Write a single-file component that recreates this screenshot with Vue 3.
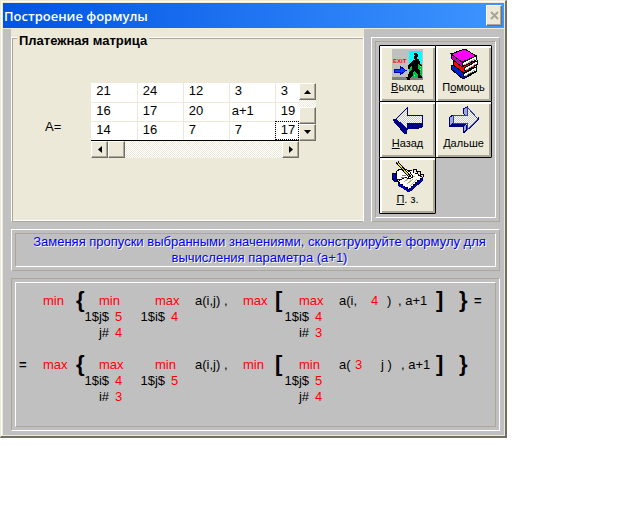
<script setup>
const matrix = [
  ['21', '24', '12', '3', '3'],
  ['16', '17', '20', 'a+1', '19'],
  ['14', '16', '7', '7', '17']
]

const formulas = [
  {
    lead: '',
    outer: 'min',
    first: { fn: 'min', range: '1$j$', count: '5', index: 'j#', skip: '4' },
    second: { fn: 'max', range: '1$i$', count: '4' },
    inner: 'max',
    third: { fn: 'max', range: '1$i$', count: '4', index: 'i#', skip: '3' },
    kind: 'by-column',
    arg: [{ t: 'a(i,' }, { t: '4', red: true }, { t: ')' }, { t: ', a+1' }],
    tail: '='
  },
  {
    lead: '=',
    outer: 'max',
    first: { fn: 'max', range: '1$i$', count: '4', index: 'i#', skip: '3' },
    second: { fn: 'min', range: '1$j$', count: '5' },
    inner: 'min',
    third: { fn: 'min', range: '1$j$', count: '5', index: 'j#', skip: '4' },
    kind: 'by-row',
    arg: [{ t: 'a(' }, { t: '3', red: true }, { t: 'j )' }, { t: ', a+1' }],
    tail: ''
  }
]
</script>

<template>
  <main class="window">
    <header class="titlebar">
      <h1>Построение формулы</h1>
      <button class="close" type="button" aria-label="Закрыть">
        <svg width="9" height="9" viewBox="0 0 9 9"><path d="M1 1L8 8M8 1L1 8" stroke="#a7a497" stroke-width="2" /></svg>
      </button>
    </header>

    <div class="body">
      <div class="top">
        <section class="matrix-box">
          <div class="group">
            <h2>Платежная матрица</h2>
            <div class="matrix">
              <span class="name">A=</span>
              <div class="grid-view">
                <table>
                  <tbody>
                    <tr v-for="(row, r) in matrix" :key="r">
                      <td v-for="(cell, c) in row" :key="c" :class="{ wide: cell.length > 2, focus: r === 2 && c === 4 }">{{ cell }}</td>
                    </tr>
                  </tbody>
                </table>
                <div class="bar vertical">
                  <button type="button" aria-label="Вверх"><svg width="7" height="4" viewBox="0 0 7 4"><path d="M0 4L3.500 0L7 4Z" /></svg></button>
                  <span class="track"></span>
                  <span class="thumb"></span>
                  <button type="button" aria-label="Вниз"><svg width="7" height="4" viewBox="0 0 7 4"><path d="M0 0L3.500 4L7 0Z" /></svg></button>
                </div>
                <div class="bar horizontal">
                  <button type="button" aria-label="Влево"><svg width="4" height="7" viewBox="0 0 4 7"><path d="M4 0L0 3.500L4 7Z" /></svg></button>
                  <span class="thumb"></span>
                  <span class="track"></span>
                  <button type="button" aria-label="Вправо"><svg width="4" height="7" viewBox="0 0 4 7"><path d="M0 0L4 3.500L0 7Z" /></svg></button>
                </div>
              </div>
            </div>
          </div>
        </section>

        <nav class="panel raised tools">
          <div class="inset buttons">
            <button class="tool" type="button">
              <svg width="32" height="32" viewBox="0 0 32 32" shape-rendering="crispEdges">
                <rect width="31" height="31" fill="#c0c0c0" />
                <rect y="28" width="31" height="3" fill="#808080" />
                <rect x="17" y="2" width="13" height="13" fill="#00ffff" />
                <rect x="17" y="15" width="13" height="13" fill="#00c040" />
                <path d="M18 17h1m2 0h1m3 0h1m2 0h1M25 20h1m2 0h1M24 23h1m2 0h1M22 26h1m3 0h1" stroke="#a0f0a0" />
                <text x="1" y="14" font-size="6" font-weight="bold" fill="#ff0000" font-family="Liberation Sans, sans-serif">EXiT</text>
                <path d="M2 20h6v-3l6 4.500l-6 4.500v-3h-6z" fill="#0040ff" stroke="#0000c0" stroke-width="1" />
                <path d="M22 4h3v1h1v3h-1v2h2v2h1v3l2 2h-1l-3-2v5l2 2v3l2 3v1h-4v-3l-3-4-2 1v3l-2 3h-1v2h-3v-1l-1-2h1l1-1 1-4 3-2v-5l-2 2v2h-2v-3l3-4 3-2h1v-1h-1v-3h1z" fill="#000" />
              </svg>
              <span><u>В</u>ыход</span>
            </button>
            <button class="tool" type="button">
              <svg width="32" height="32" viewBox="0 0 32 32" shape-rendering="crispEdges">
                <g stroke="#000" stroke-width="1">
                  <path d="M4 16L3 20L15 30L28 23V19L15 20Z" fill="#0020d0" />
                  <path d="M15 25L28 18V22L15 28Z" fill="#fff" />
                  <path d="M6 12L5 16L16 24L29 16V12L16 14Z" fill="#ff0000" />
                  <path d="M16 19L29 12V15L16 22Z" fill="#fff" />
                  <path d="M3 5L4 10L14 18L28 11V7L14 13Z" fill="#c000c0" />
                  <path d="M14 14L28 7V11L14 17Z" fill="#fff" />
                  <path d="M17 0L28 7L14 13L3 5Z" fill="#ff00ff" />
                </g>
                <path d="M16 16L27 10M18 21L28 15M17 27L27 21" stroke="#a0a0a0" />
              </svg>
              <span>П<u>о</u>мощь</span>
            </button>
            <button class="tool" type="button">
              <svg width="32" height="32" viewBox="0 0 32 32" shape-rendering="crispEdges">
                <defs>
                  <pattern id="mesh" width="2" height="2" patternUnits="userSpaceOnUse">
                    <rect width="2" height="2" fill="#fff" /><rect width="1" height="1" fill="#c8c8c8" /><rect x="1" y="1" width="1" height="1" fill="#c8c8c8" />
                  </pattern>
                </defs>
                <path d="M1 15L4 14L15 24V18H30V22L27 23H14V28H12Z" fill="#000080" stroke="#000080" />
                <path d="M4 14L15 3V10H30V18H15V24Z" fill="url(#mesh)" stroke="#0000a0" />
                <path d="M1 15L4 14L15 3" fill="none" stroke="#000080" />
              </svg>
              <span><u>Н</u>азад</span>
            </button>
            <button class="tool" type="button">
              <svg width="32" height="32" viewBox="0 0 32 32" shape-rendering="crispEdges">
                <path d="M15 4L19 2V10H5L1 13V22L5 18H19L15 22V28L19 25Z" fill="#a0a8d8" stroke="#000080" />
                <path d="M1 22L5 18H19L16 22Z" fill="#000080" />
                <path d="M16 28L30 15V13L19 24Z" fill="#8088c0" stroke="#000080" />
                <path d="M5 10H19V2L30 14L19 25V18H5Z" fill="url(#mesh)" stroke="#3040a0" />
              </svg>
              <span><u>Д</u>альше</span>
            </button>
            <button class="tool" type="button">
              <svg width="32" height="32" viewBox="0 0 32 32" shape-rendering="crispEdges">
                <path d="M6 21L17 29L30 17V20L17 31L6 24Z" fill="#0000e0" stroke="#000080" />
                <path d="M18 9L30 16L17 28L6 21Z" fill="#fff" stroke="#000" stroke-dasharray="2 1" />
                <path d="M12 21L16 18M15 23L21 18M18 25L25 18M19 14L23 16" stroke="#b8b870" />
                <path d="M21 11v-3h3v3M25 13v-3h3v3M28 16v-3h3v3" fill="none" stroke="#000" />
                <path d="M1 12H5V20H2L0 17Z" fill="#0000c0" stroke="#000" />
                <path d="M4 11L8 8H14L18 11L21 16L17 18L13 16L10 18H5Z" fill="#fff" stroke="#000" />
                <path d="M10 14H14M9 16H13" stroke="#808080" />
                <path d="M5 1L18 16" stroke="#000" stroke-width="3" />
                <path d="M5 1L17 15" stroke="#f0e000" stroke-width="1" />
              </svg>
              <span><u>П</u>. з.</span>
            </button>
          </div>
        </nav>
      </div>

      <section class="panel raised">
        <p class="inset message">Заменяя пропуски выбранными значениями, сконструируйте формулу для вычисления параметра (a+1)</p>
      </section>

      <section class="panel sunken work">
        <div class="outset">
          <div v-for="(f, n) in formulas" :key="n" class="formula">
            <b>{{ f.lead }}</b>
            <span class="red">{{ f.outer }}</span>
            <b class="brace">{</b>
            <div v-for="(op, k) in [f.first, f.second]" :key="k" class="operator">
              <span class="red fn">{{ op.fn }}</span>
              <span class="label">{{ op.range }}</span><span class="red">{{ op.count }}</span>
              <template v-if="op.index"><span class="label">{{ op.index }}</span><span class="red">{{ op.skip }}</span></template>
            </div>
            <span>a(i,j) ,</span>
            <span class="red">{{ f.inner }}</span>
            <b class="brace">[</b>
            <div class="operator">
              <span class="red fn">{{ f.third.fn }}</span>
              <span class="label">{{ f.third.range }}</span><span class="red">{{ f.third.count }}</span>
              <span class="label">{{ f.third.index }}</span><span class="red">{{ f.third.skip }}</span>
            </div>
            <div class="arg" :class="f.kind">
              <span v-for="(part, p) in f.arg" :key="p" :class="{ red: part.red }">{{ part.t }}</span>
            </div>
            <b class="brace">]</b>
            <b class="brace">}</b>
            <b>{{ f.tail }}</b>
          </div>
        </div>
      </section>
    </div>
  </main>
</template>

<style>
body {
  background: #fff;
}
</style>

<style scoped>
* {
  box-sizing: border-box;
}

h1,
h2,
p {
  margin: 0;
}

button {
  font: inherit;
  color: inherit;
  padding: 0;
}

.window {
  width: 79.2%;
  min-width: 507px;
  font: 13px/16px "Liberation Sans", Arial, sans-serif;
  color: #000;
  background: #c0c0c0;
  border: 1px solid #ece9d8;
  border-right: 2px solid #716f64;
  border-bottom: 2px solid #716f64;
  box-shadow: inset 1px 1px #fff, inset 2px 2px #ece9d8, inset -1px -1px #ece9d8;
  padding: 2px 1px 1px 2px;
}

.titlebar {
  display: flex;
  align-items: center;
  justify-content: space-between;
  height: 25px;
  padding: 0 2px 0 1px;
  background: linear-gradient(to right, #0054e3, #3d95ff);
}

.titlebar h1 {
  font: 600 13px/16px "Open Sans", sans-serif;
  color: #fff;
}

.close {
  display: grid;
  place-items: center;
  width: 16px;
  height: 21px;
  background: #ece9d8;
  border: 1px solid;
  border-color: #fff #716f64 #716f64 #fff;
  box-shadow: inset -1px -1px #aca899;
}

.body {
  display: grid;
  gap: 7px;
  padding: 0 4px 4px 8px;
  border-top: 1px solid #ece9d8;
}

.top {
  display: flex;
  gap: 7px;
}

.matrix-box {
  flex: 1;
  display: flex;
  background: #ece9d8;
  padding-top: 8px;
}

.group {
  flex: 1;
  border: 1px solid #fff;
  border-bottom-color: #aca899;
  box-shadow: inset 1px 1px #aca899, inset 0 -1px #fff;
}

.group h2 {
  width: max-content;
  margin: -5px 0 0 5px;
  padding: 0 2px;
  background: #ece9d8;
  font-size: 13px;
  line-height: 16px;
}

.matrix {
  display: flex;
  justify-content: flex-start;
  align-items: center;
  gap: 30px;
  padding: 34px 0 0 33px;
}

.name {
  padding-top: 14px;
}

.grid-view {
  display: grid;
  grid-template-columns: 208px 17px;
}

table {
  table-layout: fixed;
  width: 208px;
  border-collapse: collapse;
}

td {
  width: 46px;
  height: 19px;
  padding: 0 0 2px 5px;
  background: #fff;
  border-right: 1px solid #ece9d8;
  border-bottom: 1px solid #ece9d8;
  line-height: 16px;
}

td:last-child {
  width: 24px;
  border-right: 0;
}

tr:last-child td {
  border-bottom: 1px solid #000;
}

td.wide {
  padding-left: 2px;
}

td.focus {
  outline: 1px dotted #000;
  outline-offset: -1px;
}

.bar {
  display: flex;
}

.vertical {
  flex-direction: column;
}

.bar button,
.thumb {
  flex: none;
  display: grid;
  place-items: center;
  width: 17px;
  height: 17px;
  background: #ece9d8;
  border: 1px solid;
  border-color: #fff #716f64 #716f64 #fff;
  box-shadow: inset -1px -1px #aca899;
}

.track {
  flex: 1;
  background: repeating-conic-gradient(#fff 0 25%, #ece9d8 0 50%) 0 0 / 2px 2px;
}

.panel {
  border: 1px solid;
  padding: 3px;
}

.raised {
  border-color: #fff #aca899 #aca899 #fff;
}

.sunken {
  border-color: #aca899 #fff #fff #aca899;
}

.inset {
  border: 1px solid;
  border-color: #aca899 #fff #fff #aca899;
}

.outset {
  border: 1px solid;
  border-color: #fff #aca899 #aca899 #fff;
}

.tools {
  margin-top: 8px;
}

.buttons {
  display: grid;
  grid-template-columns: 56px 56px;
  grid-auto-rows: 56px;
  padding: 3px 4px 4px 3px;
}

.tool {
  display: flex;
  flex-direction: column;
  align-items: center;
  width: 57px;
  height: 57px;
  padding-top: 3px;
  background: #ece9d8;
  border: 1px solid #000;
  border-radius: 1px;
  box-shadow: inset 2px 2px #fff, inset -2px -2px #aca899;
  font-size: 11px;
  line-height: 12px;
}

.message {
  padding: 0 0 0 8px;
  min-height: 34px;
  text-align: center;
  color: #0000f0;
  text-shadow: 1px 1px #fff;
}

.outset {
  display: grid;
  align-content: start;
  gap: 16px;
  min-height: 145px;
  padding: 10px 0 0 3px;
}

.formula {
  display: grid;
  grid-template-columns: 24px 33px 8px 56px 55px 48px 32px 9px 55px 97px 23px 15px 12px;
  align-items: start;
  white-space: nowrap;
}

.brace {
  font-size: 22px;
  line-height: 14px;
}

.operator {
  display: grid;
  grid-template-columns: 25px auto;
  column-gap: 6px;
  justify-content: start;
}

.fn {
  grid-column: 1 / -1;
  padding-left: 15px;
}

.label {
  text-align: right;
}

.arg {
  display: grid;
  justify-content: start;
}

.by-column {
  grid-template-columns: 32px 16px 11px auto;
}

.by-row {
  grid-template-columns: 16px 26px 20px auto;
}

.red {
  color: #ff0000;
}
</style>
